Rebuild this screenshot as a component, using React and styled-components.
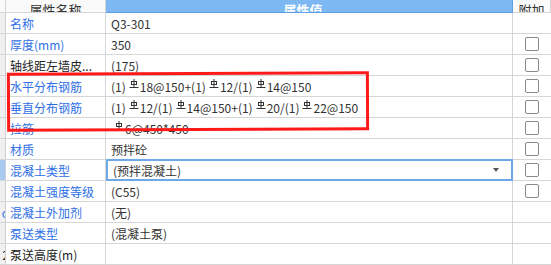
import React from 'react';
import styled, { createGlobalStyle } from 'styled-components';

const GlobalStyle = createGlobalStyle`
  html, body {
    margin: 0;
    padding: 0;
    background: #fff;
  }
  body {
    font-family: "Noto Sans CJK SC", "Noto Sans", sans-serif;
    font-size: 12px;
    overflow: hidden;
  }
`;

const Sheet = styled.div`
  position: relative;
  width: 551px;
  height: 265px;
  overflow: hidden;
  background: #fff;
`;

const Grid = styled.div`
  display: grid;
  grid-template-columns: 6px 100px 407px 38px;
  grid-template-rows: 13px;
  grid-auto-rows: 21px;
`;

const HeadCell = styled.div`
  height: 13px;
  display: flex;
  align-items: flex-end;
  justify-content: center;
  overflow: hidden;
  box-sizing: border-box;
  background: ${(p) => (p.$blue ? '#7db8f2' : '#fafafa')};
  color: ${(p) => (p.$blue ? '#fff' : '#333')};
  border-bottom: 1px solid ${(p) => (p.$blue ? '#5c9fe4' : '#d6d6d6')};
  border-right: 1px solid ${(p) => (p.$blue ? '#5c9fe4' : '#d6d6d6')};
  font-size: 13px;
  font-weight: ${(p) => (p.$blue ? 'bold' : 'normal')};
  line-height: 20px;

  span {
    margin-bottom: -8px;
    padding-right: ${(p) => p.$shift || 0}px;
  }
`;

const Strip = styled.div`
  box-sizing: border-box;
  background: ${(p) => (p.$active ? '#a9cbf1' : '#f0f0f0')};
  border-right: 1px solid #cfcfcf;
  border-bottom: 1px solid #d6d6d6;
  overflow: hidden;
  display: flex;
  align-items: center;
  justify-content: flex-end;
  color: ${(p) => p.$markColor || '#333'};
  font-size: 12px;

  span {
    margin-right: -4px;
  }
`;

const NameCell = styled.div`
  box-sizing: border-box;
  border-right: 1px solid #d6d6d6;
  border-bottom: 1px solid #d6d6d6;
  padding-left: 4px;
  display: flex;
  align-items: center;
  white-space: nowrap;
  overflow: hidden;
  color: ${(p) => (p.$plain ? '#222' : '#2e6fe6')};
`;

const ValueCell = styled.div`
  box-sizing: border-box;
  border-right: 1px solid #d6d6d6;
  border-bottom: 1px solid #d6d6d6;
  padding-left: 5px;
  display: flex;
  align-items: center;
  white-space: nowrap;
  color: #333;
`;

const Dropdown = styled.div`
  box-sizing: border-box;
  border: 2px solid #6da8e8;
  margin-top: -1px;
  height: 22px;
  padding: 0 12px 0 5px;
  display: flex;
  align-items: center;
  justify-content: space-between;
  color: #333;
  background: #fff;
`;

const Caret = styled.span`
  width: 0;
  height: 0;
  border-left: 3px solid transparent;
  border-right: 3px solid transparent;
  border-top: 4px solid #555;
`;

const AddCell = styled.div`
  box-sizing: border-box;
  border-bottom: 1px solid #d6d6d6;
  display: flex;
  align-items: center;
  justify-content: center;
`;

const Check = styled.span`
  width: 12px;
  height: 12px;
  border: 1px solid #8a8a8a;
  border-radius: 2px;
  background: #fff;
`;

const Mark = styled.div`
  position: absolute;
  left: 7px;
  top: 72px;
  width: 362px;
  height: 59px;
  box-sizing: border-box;
  border: 3.5px solid #ff1a1a;
  transform: rotate(-0.25deg);
  pointer-events: none;
`;

const Bar = () => (
  <svg width="10" height="10" viewBox="0 0 10 10" style={{ margin: '0 1px 5px 3px' }}>
    <g stroke="#333" strokeWidth="1" fill="none">
      <rect x="2.5" y="2.5" width="5" height="3" />
      <line x1="5" y1="0" x2="5" y2="8" />
      <line x1="0.5" y1="8.5" x2="9.5" y2="8.5" />
    </g>
  </svg>
);

const Rebar = ({ text }) => {
  const parts = text.split('#');
  return (
    <span style={{ display: 'inline-flex', alignItems: 'center' }}>
      {parts.map((p, i) => (
        <React.Fragment key={i}>
          {i > 0 && <Bar />}
          {p}
        </React.Fragment>
      ))}
    </span>
  );
};

const rows = [
  { name: '名称', value: 'Q3-301' },
  { name: '厚度(mm)', value: '350', check: true },
  { name: '轴线距左墙皮...', value: '(175)', check: true, plain: true },
  { name: '水平分布钢筋', value: '(1)#18@150+(1)#12/(1)#14@150', check: true },
  { name: '垂直分布钢筋', value: '(1)#12/(1)#14@150+(1)#20/(1)#22@150', check: true },
  { name: '拉筋', value: '#6@450*450', check: true },
  { name: '材质', value: '预拌砼', check: true },
  { name: '混凝土类型', value: '(预拌混凝土)', check: true, select: true },
  { name: '混凝土强度等级', value: '(C55)', check: true },
  { name: '混凝土外加剂', value: '(无)', mark: 'o', markColor: '#2e6fe6' },
  { name: '泵送类型', value: '(混凝土泵)' },
  { name: '泵送高度(m)', value: '', plain: true, mark: '2' },
];

export default function App() {
  return (
    <Sheet>
      <GlobalStyle />
      <Grid>
        <HeadCell />
        <HeadCell><span>属性名称</span></HeadCell>
        <HeadCell $blue $shift={12}><span>属性值</span></HeadCell>
        <HeadCell><span>附加</span></HeadCell>
        {rows.map((r) => (
          <React.Fragment key={r.name}>
            <Strip $active={r.select} $markColor={r.markColor}>
              {r.mark && <span>{r.mark}</span>}
            </Strip>
            <NameCell $plain={r.plain}>{r.name}</NameCell>
            {r.select ? (
              <Dropdown>
                {r.value}
                <Caret />
              </Dropdown>
            ) : (
              <ValueCell>
                <Rebar text={r.value} />
              </ValueCell>
            )}
            <AddCell>{r.check && <Check />}</AddCell>
          </React.Fragment>
        ))}
      </Grid>
      <Mark />
    </Sheet>
  );
}
